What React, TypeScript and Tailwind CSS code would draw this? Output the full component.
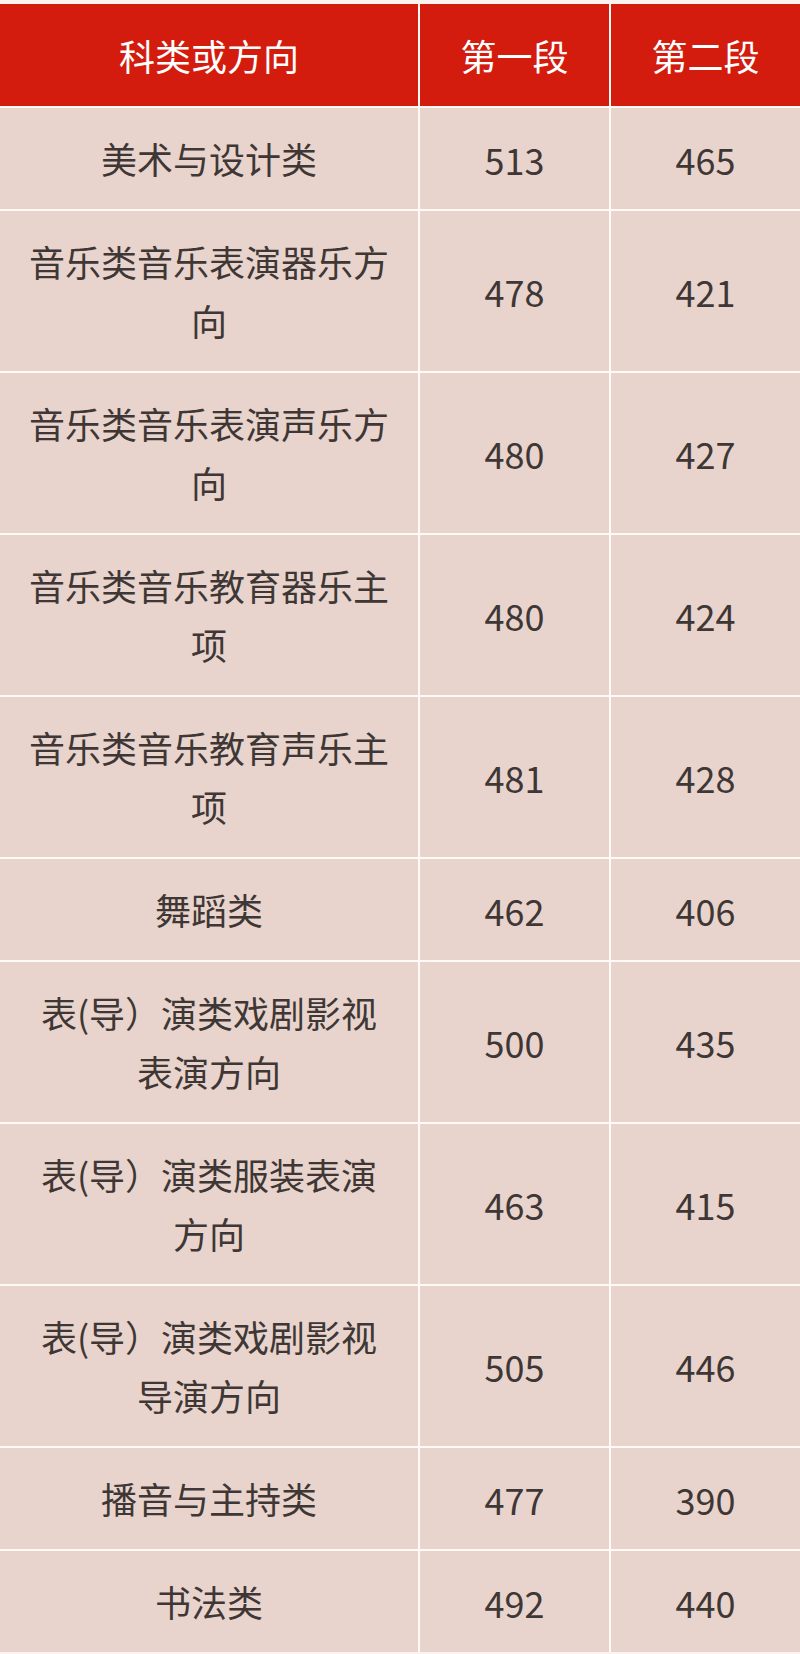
const rows: { name: string[]; first: number; second: number }[] = [
  { name: ['美术与设计类'], first: 513, second: 465 },
  { name: ['音乐类音乐表演器乐方', '向'], first: 478, second: 421 },
  { name: ['音乐类音乐表演声乐方', '向'], first: 480, second: 427 },
  { name: ['音乐类音乐教育器乐主', '项'], first: 480, second: 424 },
  { name: ['音乐类音乐教育声乐主', '项'], first: 481, second: 428 },
  { name: ['舞蹈类'], first: 462, second: 406 },
  { name: ['表(导）演类戏剧影视', '表演方向'], first: 500, second: 435 },
  { name: ['表(导）演类服装表演', '方向'], first: 463, second: 415 },
  { name: ['表(导）演类戏剧影视', '导演方向'], first: 505, second: 446 },
  { name: ['播音与主持类'], first: 477, second: 390 },
  { name: ['书法类'], first: 492, second: 440 },
]

export default function App() {
  return (
    <div
      className="min-h-[1654px] w-[800px] bg-[#fbf3ef] pt-1"
      style={{ fontFamily: '"Noto Sans CJK SC", "Noto Sans", sans-serif' }}
    >
      <div className="grid grid-cols-[418px_189px_1fr] gap-[2px] bg-[#fffaf5] text-[36px]">
        {/* Header */}
        <div className="flex h-[102px] items-center justify-center bg-[#d31c0d] text-white">科类或方向</div>
        <div className="flex h-[102px] items-center justify-center bg-[#d31c0d] text-white">第一段</div>
        <div className="flex h-[102px] items-center justify-center bg-[#d31c0d] text-white">第二段</div>

        {rows.map((row, i) => (
          <div key={i} className="contents">
            <div className="bg-[#e8d4cc] px-6 py-[21px] text-center leading-[59px] text-[#3e3735]">
              {row.name.map((line, j) => (
                <div key={j}>{line}</div>
              ))}
            </div>
            <div className="flex items-center justify-center bg-[#e8d4cc] text-[#3e3735]">{row.first}</div>
            <div className="flex items-center justify-center bg-[#e8d4cc] text-[#3e3735]">{row.second}</div>
          </div>
        ))}
      </div>
    </div>
  )
}
